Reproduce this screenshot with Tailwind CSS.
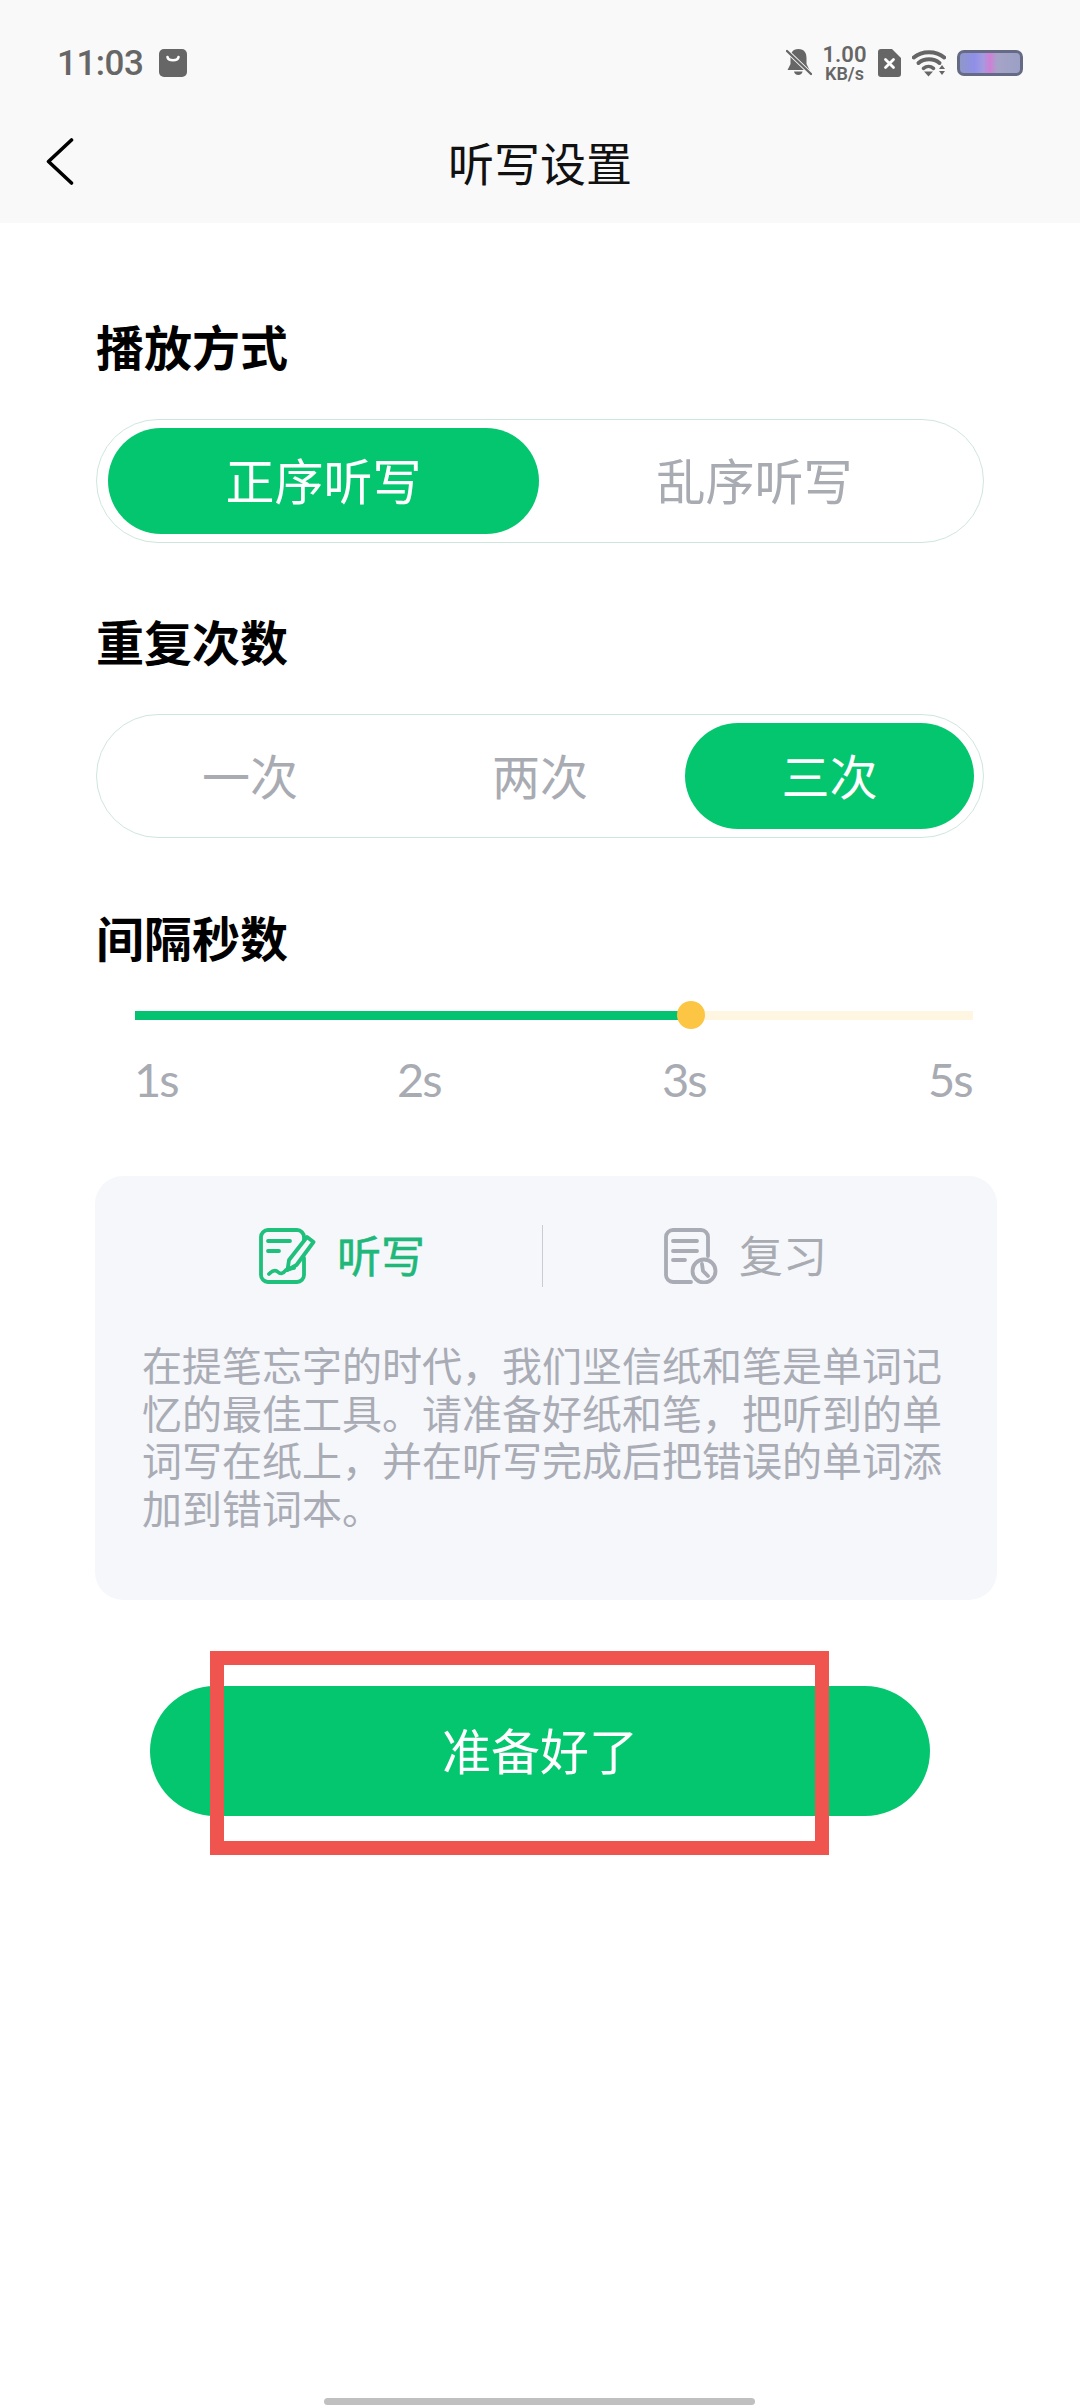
<!DOCTYPE html>
<html lang="zh-CN">
<head>
    <meta charset="UTF-8">
    <meta name="viewport" content="width=device-width, initial-scale=1.0">
    <title>听写设置</title>
    <script src="https://cdn.jsdelivr.net/npm/@tailwindcss/browser@4"></script>
</head>
<body class="bg-white w-[1080px] h-[2408px] relative overflow-hidden [font-family:'Noto_Sans_CJK_SC',sans-serif]">

    <!-- status bar + title -->
    <header class="bg-[#f9f9f9] h-[223px]">
        <div class="h-[103px] pt-[23px] pl-[57px] pr-[57px] flex items-center justify-between text-[#666666]">
            <div class="flex items-center">
                <span class="w-[102px] text-[35px] font-medium leading-none tracking-[-0.5px] [font-family:Roboto,sans-serif]">11:03</span>
                <svg class="w-[28px] h-[28px]" viewBox="0 0 28 28">
                    <path d="M5 0h18a5 5 0 0 1 5 5v18a5 5 0 0 1-5 5H5a5 5 0 0 1-5-5V5a5 5 0 0 1 5-5z" fill="#666666"/>
                    <path d="M8.500 8c.8 4.400 10.200 4.400 11 0" fill="none" stroke="#ffffff" stroke-width="2.600" stroke-linecap="round"/>
                </svg>
            </div>
            <div class="flex items-center">
                <svg class="w-[26px] h-[28px]" viewBox="0 0 26 28">
                    <path d="M12.300 0C6.500 0 4.500 4 4.500 9v6l-3 6h22l-3-6V9c0-5-2-9-8.200-9zM8 22.500a4.400 4.400 0 0 0 8.600 0z" fill="#666666"/>
                    <path d="M1 2 25 25" stroke="#f9f9f9" stroke-width="4"/>
                    <path d="M1 2 25 25" stroke="#666666" stroke-width="2.400" stroke-linecap="round"/>
                </svg>
                <div class="ml-[11px] w-[43px] flex flex-col items-center font-semibold [font-family:Roboto,sans-serif]">
                    <span class="text-[22px] leading-[20px]">1.00</span>
                    <span class="text-[18px] leading-[17px]">KB/s</span>
                </div>
                <svg class="ml-[12px] w-[23px] h-[28px]" viewBox="0 0 23 28">
                    <path d="M3 0h11l9 9v16a3 3 0 0 1-3 3H3a3 3 0 0 1-3-3V3a3 3 0 0 1 3-3z" fill="#666666"/>
                    <path d="M7.500 10.500 15.500 18.500M15.500 10.500 7.500 18.500" stroke="#ffffff" stroke-width="2.800" stroke-linecap="round"/>
                </svg>
                <svg class="ml-[11px] w-[34px] h-[28px]" viewBox="0 0 34 28">
                    <path d="M1.800 8.500C10 1.500 24 1.500 32.200 8.500" fill="none" stroke="#666666" stroke-width="4" stroke-linecap="round"/>
                    <path d="M6.500 14c6-5 15-5 21 0" fill="none" stroke="#666666" stroke-width="4" stroke-linecap="round"/>
                    <path d="M11.500 19.300c3-2.500 7-2.500 10 0" fill="none" stroke="#666666" stroke-width="3.600" stroke-linecap="round"/>
                    <path d="M12 22.500h9l-4.500 5zM27 20l3-4 3 4zM27 22h6l-3 4z" fill="#666666"/>
                </svg>
                <div class="ml-[11px] w-[66px] h-[26px] rounded-[7px] border-[3px] border-[#666b85] bg-[linear-gradient(90deg,#8f97c8_0%,#8f8fe8_24%,#a39be0_38%,#cf7fd6_50%,#a6a3c8_62%,#9ba0c4_100%)]"></div>
            </div>
        </div>
        <div class="h-[120px] relative flex items-center justify-center">
            <svg class="absolute left-[45px] top-[34px] w-[29px] h-[49px]" viewBox="0 0 29 49">
                <path d="M26.500 3 3.500 24.500 26.500 46" fill="none" stroke="#000000" stroke-width="3.600" stroke-linecap="round" stroke-linejoin="round"/>
            </svg>
            <h1 class="pb-[5px] text-[46px] leading-none font-normal text-[#111111]">听写设置</h1>
        </div>
    </header>

    <main class="pl-[96px]">
        <h2 class="mt-[95px] h-[60px] pb-[7px] flex items-center text-[48px] font-bold text-black">播放方式</h2>
        <div class="mt-[41px] w-[888px] h-[124px] rounded-full border border-[#cfe6df] pl-[11px] flex items-center text-[49px]">
            <div class="w-[431px] h-[106px] pb-[5px] rounded-full bg-[#04c66e] text-white flex items-center justify-center">正序听写</div>
            <div class="w-[431px] pb-[5px] text-[#a9abb3] text-center">乱序听写</div>
        </div>

        <h2 class="mt-[70px] h-[60px] pb-[7px] flex items-center text-[48px] font-bold text-black">重复次数</h2>
        <div class="mt-[41px] w-[888px] h-[124px] rounded-full border border-[#cfe6df] pl-[8px] flex items-center text-[48px]">
            <div class="w-[290px] pb-[5px] text-[#a9abb3] text-center">一次</div>
            <div class="w-[290px] pb-[5px] text-[#a9abb3] text-center">两次</div>
            <div class="w-[289px] h-[106px] pb-[5px] rounded-full bg-[#04c66e] text-white flex items-center justify-center">三次</div>
        </div>

        <h2 class="mt-[71px] h-[60px] pb-[7px] flex items-center text-[48px] font-bold text-black">间隔秒数</h2>
        <div class="relative mt-[32px] ml-[39px] w-[838px] h-[28px] flex items-center">
            <div class="w-[556px] h-[9px] bg-[#05c270]"></div>
            <div class="flex-1 h-[9px] bg-[#fef6e0]"></div>
            <div class="absolute left-[542px] top-0 w-[28px] h-[28px] rounded-full bg-[#fcc644]"></div>
        </div>
        <div class="mt-[25px] ml-[38px] w-[840px] h-[50px] grid grid-cols-[263px_265px_266px_auto] items-center text-[47px] leading-none tracking-[-2px] text-[#a9abb3] [font-family:Lato,sans-serif]">
            <span>1s</span><span>2s</span><span>3s</span><span>5s</span>
        </div>

        <section class="mt-[72px] -ml-px w-[902px] h-[424px] rounded-[28px] bg-[#f5f7fa] pt-[49px]">
            <div class="flex items-center h-[62px]">
                <div class="w-[447px] pl-[164px] flex items-center gap-[21px] text-[44px] text-[#1fb87a]">
                    <svg class="w-[57px] h-[56px] shrink-0" viewBox="0 0 57 56" fill="none" stroke="#1fbf7c" stroke-width="3.800" stroke-linecap="round" stroke-linejoin="round">
                        <path d="M45 12V9a7 7 0 0 0-7-7H9a7 7 0 0 0-7 7v38a7 7 0 0 0 7 7h29a7 7 0 0 0 7-7V30"/>
                        <path d="M9 13h22M9 23h11"/>
                        <path d="M48 9l6.500 5-17 23-9 5 1.500-10z"/>
                        <path d="M10 46c4-4 7-4 9-2s5 2 7-1 6-2 9-3"/>
                    </svg>
                    <span class="pb-[5px] [-webkit-text-stroke:0.6px_#1fb87a]">听写</span>
                </div>
                <div class="w-px h-[62px] bg-[#c9ccd2]"></div>
                <div class="pl-[121px] flex items-center gap-[21px] text-[44px] text-[#a9abb3]">
                    <svg class="w-[54px] h-[56px] shrink-0" viewBox="0 0 54 56" fill="none" stroke="#a9abb5" stroke-width="3.800" stroke-linecap="round" stroke-linejoin="round">
                        <path d="M44 28V9a7 7 0 0 0-7-7H9a7 7 0 0 0-7 7v38a7 7 0 0 0 7 7h18"/>
                        <path d="M9 13h24M9 23h24M9 32h12"/>
                        <circle cx="40" cy="43" r="11.500"/>
                        <path d="M38 36l1 7 5 5"/>
                    </svg>
                    <span class="pb-[5px]">复习</span>
                </div>
            </div>
            <p class="mt-[54px] ml-[47px] w-[810px] text-[40px] leading-[47.6px] text-[#a9abb5]">在提笔忘字的时代，我们坚信纸和笔是单词记忆的最佳工具。请准备好纸和笔，把听到的单词写在纸上，并在听写完成后把错误的单词添加到错词本。</p>
        </section>

        <div class="relative mt-[86px] ml-[54px] w-[780px]">
            <button class="w-full h-[130px] pb-[5px] rounded-full bg-[#04c66e] text-white text-[49px] flex items-center justify-center">准备好了</button>
            <!-- red annotation box drawn over the button -->
            <div class="absolute left-[60px] top-[-35px] w-[619px] h-[204px] border-[14px] border-[#f0544f]"></div>
        </div>
    </main>

    <div class="absolute left-[324px] bottom-[3px] w-[431px] h-[7px] rounded-full bg-[#c0c0c0]"></div>
</body>
</html>
